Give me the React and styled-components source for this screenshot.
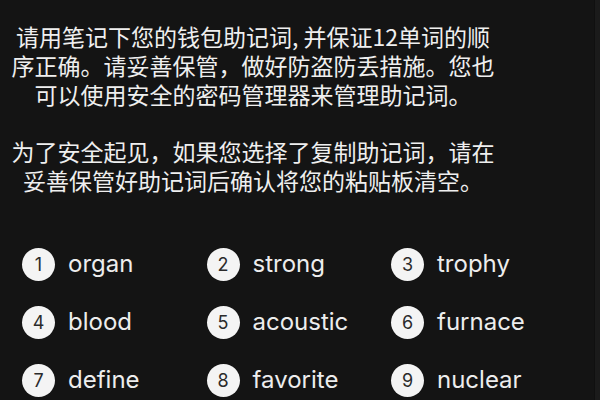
import styled, { createGlobalStyle } from "styled-components";

const GlobalStyle = createGlobalStyle`
  html, body {
    margin: 0;
    padding: 0;
    background: #141414;
  }
  body {
    font-family: "Noto Sans CJK SC", "Noto Sans", sans-serif;
  }
`;

const Screen = styled.div`
  width: 600px;
  height: 400px;
  overflow: hidden;
  display: flex;
  background: #141414;
`;

const Content = styled.div`
  flex: 1;
  display: flex;
  flex-direction: column;
  padding-top: 22px;
`;

const EdgeStrip = styled.div`
  width: 5px;
  background: #1b1b1b;
  border-left: 1px solid #101010;
`;

const Notice = styled.p`
  width: 490px;
  margin: 0 0 28px 8px;
  text-align: center;
  white-space: nowrap;
  color: #efefef;
  font-size: 23px;
  line-height: 29px;
  font-family: "Noto Sans CJK SC", sans-serif;
`;

const WordGrid = styled.div`
  display: grid;
  grid-template-columns: repeat(3, 184.5px);
  grid-auto-rows: 58px;
  padding-left: 22px;
  margin-top: 12px;
`;

const WordItem = styled.div`
  display: flex;
  align-items: center;
  gap: 13px;
`;

const Badge = styled.span`
  width: 33px;
  height: 33px;
  border-radius: 50%;
  background: #f4f4f4;
  color: #2b2b2b;
  display: flex;
  align-items: center;
  justify-content: center;
  font-family: Inter, "Liberation Sans", sans-serif;
  font-size: 18px;
  flex-shrink: 0;
`;

const Word = styled.span`
  color: #ededed;
  font-family: Inter, "Liberation Sans", sans-serif;
  font-size: 24px;
  line-height: 1;
`;

const words = [
  "organ",
  "strong",
  "trophy",
  "blood",
  "acoustic",
  "furnace",
  "define",
  "favorite",
  "nuclear",
];

export default function App() {
  return (
    <>
      <GlobalStyle />
      <Screen>
        <Content>
          <Notice>
            请用笔记下您的钱包助记词, 并保证12单词的顺
            <br />
            序正确。请妥善保管，做好防盗防丢措施。您也
            <br />
            可以使用安全的密码管理器来管理助记词。
          </Notice>
          <Notice>
            为了安全起见，如果您选择了复制助记词，请在
            <br />
            妥善保管好助记词后确认将您的粘贴板清空。
          </Notice>
          <WordGrid>
            {words.map((word, index) => (
              <WordItem key={word}>
                <Badge>{index + 1}</Badge>
                <Word>{word}</Word>
              </WordItem>
            ))}
          </WordGrid>
        </Content>
        <EdgeStrip />
      </Screen>
    </>
  );
}
